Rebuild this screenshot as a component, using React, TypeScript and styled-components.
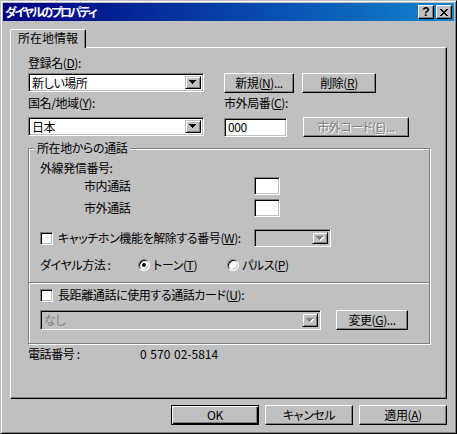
import React from 'react';
import styled, { createGlobalStyle } from 'styled-components';

const FONT = `"Noto Sans CJK JP", "Noto Sans", sans-serif`;

const GlobalStyle = createGlobalStyle`
  html, body { margin: 0; padding: 0; background: #c0c0c0; }
  body { font-family: ${FONT}; font-size: 12px; color: #000; }
  * { box-sizing: border-box; }
`;

const Window = styled.div`
  width: 457px;
  height: 434px;
  background: #c0c0c0;
  border: 1px solid;
  border-color: #c0c0c0 #000 #000 #c0c0c0;
  box-shadow: inset 1px 1px 0 #fff, inset -1px -1px 0 #808080;
  padding: 2px;
  display: flex;
  flex-direction: column;
  font-feature-settings: "palt";
  letter-spacing: -0.4px;
`;

const TitleBar = styled.div`
  height: 18px;
  flex: none;
  display: flex;
  align-items: center;
  justify-content: space-between;
  padding: 0 2px 0 2px;
  background: linear-gradient(to right, #000080, #1084d0);
`;

const TitleText = styled.div`
  color: #fff;
  font-weight: bold;
  font-size: 12px;
  line-height: 14px;
  letter-spacing: -2.2px;
  word-spacing: 0;
`;

const CaptionButtons = styled.div`
  display: flex;
  gap: 2px;
`;

const CaptionButton = styled.div`
  width: 16px;
  height: 14px;
  background: #c0c0c0;
  border: 1px solid;
  border-color: #fff #000 #000 #fff;
  box-shadow: inset -1px -1px 0 #808080;
  display: flex;
  align-items: center;
  justify-content: center;
`;

const HelpGlyph = styled.span`
  font-family: "Liberation Sans", Arial, sans-serif;
  font-weight: bold;
  font-size: 12px;
  line-height: 12px;
  letter-spacing: 0;
  margin-top: -1px;
`;

const Body = styled.div`
  flex: 1;
  display: flex;
  flex-direction: column;
  padding: 8px 7px 6px 7px;
`;

const TabStrip = styled.div`
  display: flex;
  height: 18px;
`;

const Tab = styled.div`
  position: relative;
  z-index: 1;
  width: 76px;
  height: 19px;
  background: #c0c0c0;
  border-top: 1px solid #fff;
  border-left: 1px solid #fff;
  border-right: 1px solid #000;
  box-shadow: inset -1px 0 0 #808080;
  border-radius: 2px 2px 0 0;
  padding: 1px 0 0 7px;
  line-height: 14px;
  letter-spacing: 0;
  white-space: nowrap;
`;

const TabPanel = styled.div`
  flex: 1;
  display: flex;
  flex-direction: column;
  align-items: flex-start;
  border: 1px solid;
  border-color: #fff #000 #000 #fff;
  box-shadow: inset -1px -1px 0 #808080;
  padding: 8px 0 0 17px;
`;

const Label = styled.div<{ $mt?: number; $indent?: number; $disabled?: boolean }>`
  line-height: 14px;
  height: 14px;
  white-space: nowrap;
  margin-top: ${(p) => p.$mt ?? 0}px;
  padding-left: ${(p) => p.$indent ?? 0}px;
  color: ${(p) => (p.$disabled ? '#808080' : '#000')};
`;

const Digits = styled(Label)`
  letter-spacing: 0;
  word-spacing: 1px;
`;

const M = styled.u`
  text-decoration: underline;
  text-underline-offset: 1px;
`;

const TopGrid = styled.div`
  display: grid;
  grid-template-columns: 176px auto;
  column-gap: 20px;
  align-items: start;
`;

const Cell = styled.div<{ $mt?: number }>`
  display: flex;
  align-items: center;
  margin-top: ${(p) => p.$mt ?? 0}px;
`;

const Sunken = styled.div<{ $w: number; $h: number; $disabled?: boolean }>`
  width: ${(p) => p.$w}px;
  height: ${(p) => p.$h}px;
  flex: none;
  display: flex;
  align-items: center;
  padding: 2px;
  background: ${(p) => (p.$disabled ? '#c0c0c0' : '#fff')};
  border: 1px solid;
  border-color: #808080 #fff #fff #808080;
  box-shadow: inset 1px 1px 0 #000, inset -1px -1px 0 #c0c0c0;
`;

const FieldText = styled.span<{ $disabled?: boolean }>`
  flex: 1;
  padding-left: 1px;
  line-height: 14px;
  white-space: nowrap;
  color: ${(p) => (p.$disabled ? '#808080' : '#000')};
`;

const DropButton = styled.div`
  width: 16px;
  align-self: stretch;
  flex: none;
  margin-left: auto;
  background: #c0c0c0;
  border: 1px solid;
  border-color: #c0c0c0 #000 #000 #c0c0c0;
  box-shadow: inset 1px 1px 0 #fff, inset -1px -1px 0 #808080;
  display: flex;
  align-items: center;
  justify-content: center;
`;

const Button = styled.div<{ $w: number; $ml?: number; $disabled?: boolean; $default?: boolean }>`
  width: ${(p) => p.$w}px;
  height: 20px;
  flex: none;
  margin-left: ${(p) => p.$ml ?? 0}px;
  background: #c0c0c0;
  border: 1px solid;
  border-color: ${(p) => (p.$default ? '#000' : '#fff #000 #000 #fff')};
  box-shadow: ${(p) =>
    p.$default
      ? 'inset 1px 1px 0 #fff, inset -1px -1px 0 #000, inset -2px -2px 0 #808080'
      : 'inset -1px -1px 0 #808080'};
  display: flex;
  align-items: center;
  justify-content: center;
  line-height: 14px;
  white-space: nowrap;
  color: ${(p) => (p.$disabled ? '#808080' : '#000')};
  text-shadow: ${(p) => (p.$disabled ? '1px 1px 0 #fff' : 'none')};
`;

const ButtonRow = styled.div<{ $gap: number }>`
  display: flex;
  gap: ${(p) => p.$gap}px;
`;

const GroupBox = styled.div<{ $mt: number; $pt: number; $pb: number }>`
  width: 402px;
  margin-top: ${(p) => p.$mt}px;
  padding: ${(p) => p.$pt}px 0 ${(p) => p.$pb}px 11px;
  border: 1px solid #808080;
  box-shadow: inset 1px 1px 0 #fff, 1px 1px 0 #fff;
  display: flex;
  flex-direction: column;
  align-items: flex-start;
`;

const GroupTitle = styled.div`
  margin: -8px 0 0 -6px;
  padding: 0 3px;
  background: #c0c0c0;
  line-height: 14px;
  white-space: nowrap;
`;

const FormGrid = styled.div<{ $cols: string; $mt: number }>`
  display: grid;
  grid-template-columns: ${(p) => p.$cols};
  align-items: center;
  margin-top: ${(p) => p.$mt}px;
`;

const ChoiceLine = styled.div`
  display: flex;
  align-items: center;
  gap: 5px;
  line-height: 14px;
  white-space: nowrap;
`;

const CheckBox = styled.div`
  width: 13px;
  height: 13px;
  flex: none;
  background: #fff;
  border: 1px solid;
  border-color: #808080 #fff #fff #808080;
  box-shadow: inset 1px 1px 0 #000, inset -1px -1px 0 #c0c0c0;
`;

const Radio = styled.div<{ $checked?: boolean }>`
  width: 12px;
  height: 12px;
  flex: none;
  border-radius: 50%;
  background: #fff;
  border: 1px solid;
  border-color: #808080 #fff #fff #808080;
  box-shadow: inset 1px 1px 0 #000, inset -1px -1px 0 #c0c0c0;
  display: flex;
  align-items: center;
  justify-content: center;
  margin-right: -2px;
  &::after {
    content: '';
    width: 4px;
    height: 4px;
    border-radius: 50%;
    background: ${(p) => (p.$checked ? '#000' : 'transparent')};
  }
`;

const Footer = styled.div`
  display: flex;
  justify-content: flex-end;
  gap: 6px;
  margin-top: 6px;
`;

const Arrow = ({ disabled }: { disabled?: boolean }) => (
  <svg width="8" height="5" viewBox="0 0 8 5" shapeRendering="crispEdges">
    {disabled && (
      <g fill="#fff">
        <rect x="1" y="1" width="7" height="1" />
        <rect x="2" y="2" width="5" height="1" />
        <rect x="3" y="3" width="3" height="1" />
        <rect x="4" y="4" width="1" height="1" />
      </g>
    )}
    <g fill={disabled ? '#808080' : '#000'}>
      <rect x="0" y="0" width="7" height="1" />
      <rect x="1" y="1" width="5" height="1" />
      <rect x="2" y="2" width="3" height="1" />
      <rect x="3" y="3" width="1" height="1" />
    </g>
  </svg>
);

const CloseGlyph = () => {
  const rows = ['XX....XX', '.XX..XX.', '..XXXX..', '...XX...', '..XXXX..', '.XX..XX.', 'XX....XX'];
  return (
    <svg width="8" height="7" viewBox="0 0 8 7" shapeRendering="crispEdges">
      {rows.flatMap((r, y) =>
        r.split('').map((c, x) => (c === 'X' ? <rect key={`${x}-${y}`} x={x} y={y} width="1" height="1" fill="#000" /> : null))
      )}
    </svg>
  );
};

const Combo = ({ w, h, text, disabled }: { w: number; h: number; text: string; disabled?: boolean }) => (
  <Sunken $w={w} $h={h} $disabled={disabled}>
    <FieldText $disabled={disabled}>{text}</FieldText>
    <DropButton>
      <Arrow disabled={disabled} />
    </DropButton>
  </Sunken>
);

export default function App() {
  return (
    <>
      <GlobalStyle />
      <Window>
        <TitleBar>
          <TitleText>ダイヤルのプロパティ</TitleText>
          <CaptionButtons>
            <CaptionButton>
              <HelpGlyph>?</HelpGlyph>
            </CaptionButton>
            <CaptionButton>
              <CloseGlyph />
            </CaptionButton>
          </CaptionButtons>
        </TitleBar>
        <Body>
          <TabStrip>
            <Tab>所在地情報</Tab>
          </TabStrip>
          <TabPanel>
            <TopGrid>
              <Label>
                登録名(<M>D</M>):
              </Label>
              <span />
              <Cell $mt={3}>
                <Combo w={176} h={19} text="新しい場所" />
              </Cell>
              <Cell $mt={3}>
                <ButtonRow $gap={8}>
                  <Button $w={70}>
                    新規(<M>N</M>)...
                  </Button>
                  <Button $w={74}>
                    削除(<M>R</M>)
                  </Button>
                </ButtonRow>
              </Cell>
              <Label $mt={3}>
                国名/地域(<M>Y</M>):
              </Label>
              <Label $mt={3}>
                市外局番(<M>C</M>):
              </Label>
              <Cell $mt={7}>
                <Combo w={176} h={19} text="日本" />
              </Cell>
              <Cell $mt={7}>
                <Sunken $w={63} $h={19}>
                  <FieldText>000</FieldText>
                </Sunken>
                <Button $w={106} $ml={16} $disabled>
                  市外コード(<M>E</M>)...
                </Button>
              </Cell>
            </TopGrid>

            <GroupBox $mt={11} $pt={0} $pb={10}>
              <GroupTitle>所在地からの通話</GroupTitle>
              <Label $mt={6}>外線発信番号:</Label>
              <FormGrid $cols="214px auto" $mt={2}>
                <Label $indent={44}>市内通話</Label>
                <Sunken $w={26} $h={18} />
              </FormGrid>
              <FormGrid $cols="214px auto" $mt={4}>
                <Label $indent={44}>市外通話</Label>
                <Sunken $w={26} $h={18} />
              </FormGrid>
              <FormGrid $cols="214px auto" $mt={12}>
                <ChoiceLine>
                  <CheckBox />
                  <span>
                    キャッチホン機能を解除する番号(<M>W</M>):
                  </span>
                </ChoiceLine>
                <Combo w={77} h={18} text="" disabled />
              </FormGrid>
              <FormGrid $cols="98px 89px auto" $mt={11}>
                <Label>ダイヤル方法 :</Label>
                <ChoiceLine>
                  <Radio $checked />
                  <span>
                    トーン(<M>T</M>)
                  </span>
                </ChoiceLine>
                <ChoiceLine>
                  <Radio />
                  <span>
                    パルス(<M>P</M>)
                  </span>
                </ChoiceLine>
              </FormGrid>
            </GroupBox>

            <GroupBox $mt={-1} $pt={5} $pb={13}>
              <ChoiceLine>
                <CheckBox />
                <span>
                  長距離通話に使用する通話カード(<M>U</M>):
                </span>
              </ChoiceLine>
              <FormGrid $cols="auto auto" $mt={8}>
                <Combo w={281} h={20} text="なし" disabled />
                <Button $w={72} $ml={15}>
                  変更(<M>G</M>)...
                </Button>
              </FormGrid>
            </GroupBox>

            <FormGrid $cols="112px auto" $mt={3}>
              <Label>電話番号 :</Label>
              <Digits>0 570 02-5814</Digits>
            </FormGrid>
          </TabPanel>
          <Footer>
            <Button $w={88} $default>
              OK
            </Button>
            <Button $w={88}>キャンセル</Button>
            <Button $w={88}>
              適用(<M>A</M>)
            </Button>
          </Footer>
        </Body>
      </Window>
    </>
  );
}
